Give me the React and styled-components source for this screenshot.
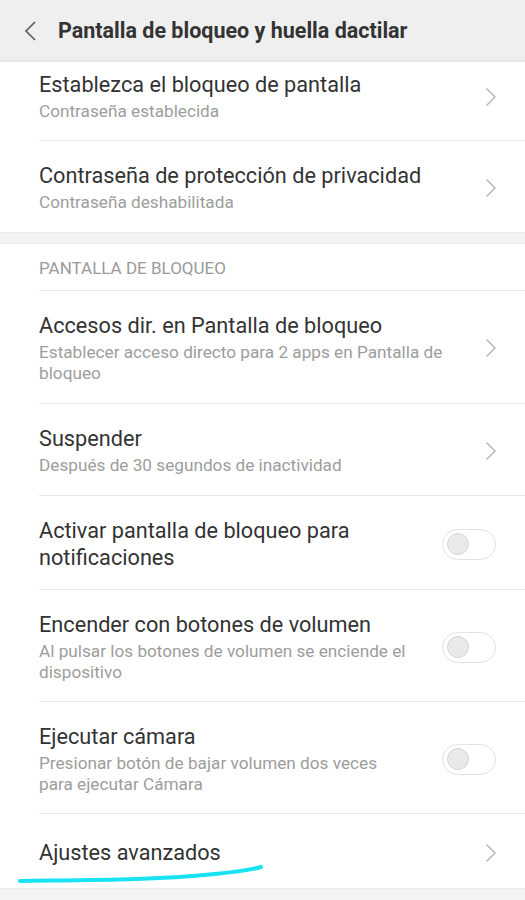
import styled, { createGlobalStyle } from "styled-components";

const GlobalStyle = createGlobalStyle`
  html, body {
    margin: 0;
    padding: 0;
    background: #f3f3f3;
  }
  body {
    font-family: Roboto, "Noto Sans", sans-serif;
  }
`;

const items = [
  {
    title: "Establezca el bloqueo de pantalla",
    sub: "Contraseña establecida",
    kind: "link",
  },
  {
    title: "Contraseña de protección de privacidad",
    sub: "Contraseña deshabilitada",
    kind: "link",
  },
];

const lockItems = [
  {
    title: "Accesos dir. en Pantalla de bloqueo",
    sub: "Establecer acceso directo para 2 apps en Pantalla de bloqueo",
    kind: "link",
  },
  {
    title: "Suspender",
    sub: "Después de 30 segundos de inactividad",
    kind: "link",
  },
  {
    title: "Activar pantalla de bloqueo para notificaciones",
    kind: "toggle",
  },
  {
    title: "Encender con botones de volumen",
    sub: "Al pulsar los botones de volumen se enciende el dispositivo",
    kind: "toggle",
  },
  {
    title: "Ejecutar cámara",
    sub: "Presionar botón de bajar volumen dos veces para ejecutar Cámara",
    kind: "toggle",
  },
  {
    title: "Ajustes avanzados",
    kind: "link",
    single: true,
  },
];

function Chevron() {
  return (
    <ChevronIcon viewBox="0 0 12 20" width="12" height="20">
      <path d="M1.5 1.5 L10 10 L1.5 18.5" />
    </ChevronIcon>
  );
}

// the list is scrolled a little, so the first row sits partly under the header
function rowPadding(item, first) {
  if (first) return "9px 29px 18px 0";
  if (item.single) return "25px 29px 22px 0";
  const bottom = item.kind === "link" ? 19 : 18;
  return `21px 29px ${bottom}px 0`;
}

function Row({ item, first }) {
  return (
    <RowBox $pad={rowPadding(item, first)}>
      <Texts $kind={item.kind}>
        <Title>{item.title}</Title>
        {item.sub && <Sub>{item.sub}</Sub>}
      </Texts>
      {item.kind === "link" ? (
        <Chevron />
      ) : (
        <Switch>
          <Knob />
        </Switch>
      )}
    </RowBox>
  );
}

function App() {
  return (
    <>
      <GlobalStyle />
      <Screen>
        <Header>
          <BackIcon viewBox="0 0 14 20" width="14" height="20">
            <path d="M12 1 L3 10 L12 19" />
          </BackIcon>
          <HeaderTitle>Pantalla de bloqueo y huella dactilar</HeaderTitle>
        </Header>
        <Group>
          {items.map((item, index) => (
            <Row key={index} item={item} first={index === 0} />
          ))}
        </Group>
        <Group>
          <SectionLabel>PANTALLA DE BLOQUEO</SectionLabel>
          {lockItems.map((item, index) => (
            <Row key={index} item={item} />
          ))}
        </Group>
        <Mark viewBox="0 0 525 40" width="525" height="40">
          <path d="M20 36 C 90 35, 160 35, 215 29 C 235 27, 250 25, 261 22" />
        </Mark>
      </Screen>
    </>
  );
}

const Screen = styled.div`
  position: relative;
  width: 525px;
  height: 900px;
  overflow: hidden;
  background: #f3f3f3;
`;

const Header = styled.div`
  display: flex;
  align-items: center;
  background: #efefef;
  border-bottom: 1px solid #e3e3e3;
  padding-left: 23px;
  box-sizing: border-box;
  height: 61px;
`;

const BackIcon = styled.svg`
  fill: none;
  stroke: #5a5a5a;
  stroke-width: 1.6;
  margin-right: 21px;
  margin-top: 1px;
`;

const HeaderTitle = styled.h1`
  margin: 0;
  font-family: Roboto, sans-serif;
  font-weight: 700;
  font-size: 21.5px;
  color: #333333;
`;

const Group = styled.div`
  background: #ffffff;
  padding-left: 39px;
  margin-bottom: 10px;
  border-top: 1px solid #ececec;
  border-bottom: 1px solid #ececec;

  &:first-of-type {
    border-top: none;
  }
`;

const SectionLabel = styled.div`
  height: 47px;
  display: flex;
  align-items: center;
  font-size: 17px;
  color: #9a9a9a;
  border-bottom: 1px solid #e8e8e8;
  padding-top: 1px;
  box-sizing: border-box;
`;

const RowBox = styled.div`
  display: flex;
  align-items: center;
  justify-content: space-between;
  padding: ${(p) => p.$pad};
  border-bottom: 1px solid #e8e8e8;

  &:last-child {
    border-bottom: none;
  }
`;

const Texts = styled.div`
  max-width: ${(p) => (p.$kind === "toggle" ? "374px" : "422px")};
  display: flex;
  flex-direction: column;
  gap: 3px;
`;

const Title = styled.div`
  font-size: 21.7px;
  line-height: 27px;
  color: #333333;
`;

const Sub = styled.div`
  font-size: 17.2px;
  line-height: 21px;
  color: #9d9d9d;
`;

const ChevronIcon = styled.svg`
  flex-shrink: 0;
  fill: none;
  stroke: #b8b8b8;
  stroke-width: 1.5;
  margin-right: -1px;
`;

const Switch = styled.div`
  flex-shrink: 0;
  width: 54px;
  height: 31px;
  box-sizing: border-box;
  border: 1px solid #e2e2e2;
  border-radius: 16px;
  background: #ffffff;
  display: flex;
  align-items: center;
  padding-left: 4px;
`;

const Knob = styled.div`
  width: 22px;
  height: 22px;
  box-sizing: border-box;
  border-radius: 50%;
  background: #e9e9e9;
  border: 1px solid #d6d6d6;
`;

const Mark = styled.svg`
  position: absolute;
  left: 0;
  top: 845px;
  fill: none;
  stroke: #17e3f2;
  stroke-width: 4;
  stroke-linecap: round;
`;

export default App;
